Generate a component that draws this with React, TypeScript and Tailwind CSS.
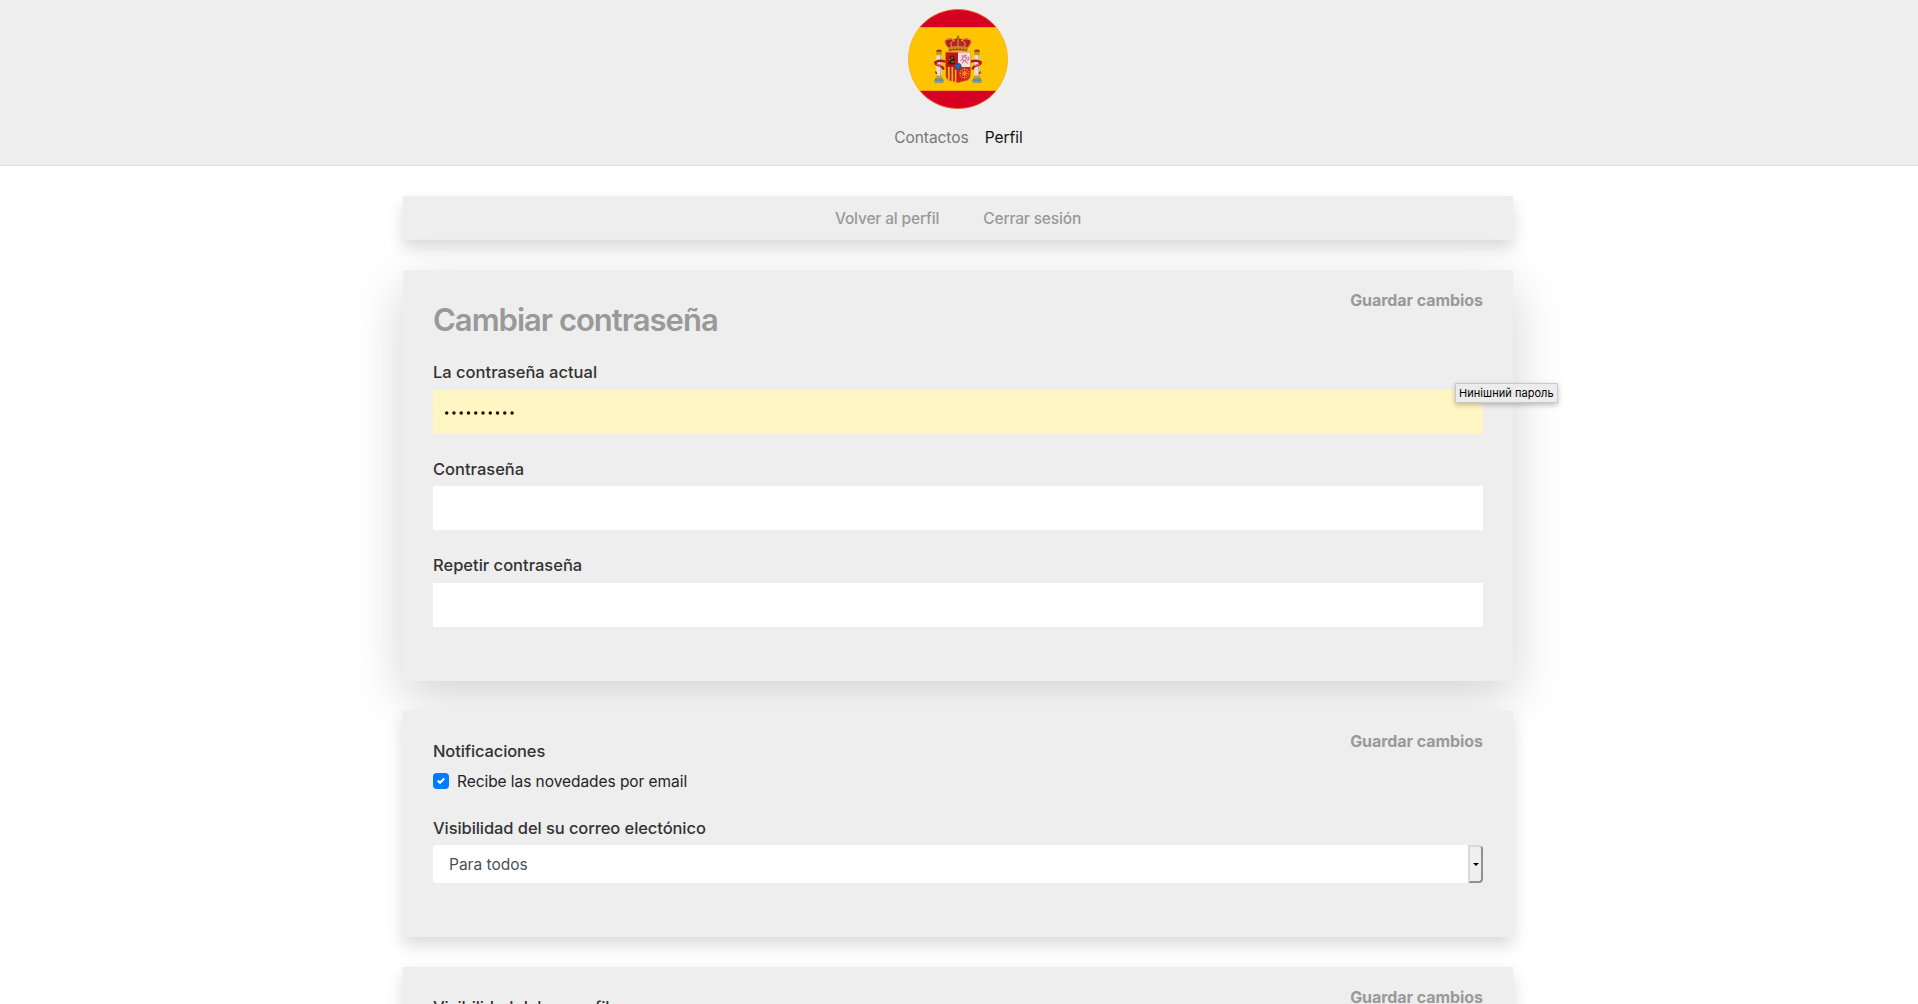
import React from 'react';

function Pillar() {
  return (
    <g>
      <rect x="-2.7" y="46" width="5.4" height="21" fill="#e4dfd2" />
      <rect x="1" y="46" width="1.4" height="21" fill="#b9b4a6" />
      <rect x="-3" y="44.2" width="6" height="2" fill="#c9a227" />
      <path d="M-2.8 41.6Q0 39.6 2.8 41.6L2.2 44.2H-2.2Z" fill="#a5351c" />
      <rect x="-2" y="42.8" width="4" height="1" fill="#d9a520" />
      <rect x="-3" y="66.6" width="6" height="2.2" fill="#c5a02a" />
      <rect x="-3.9" y="68.8" width="7.8" height="2" fill="#8d9a6a" />
      <rect x="-4.5" y="70.4" width="9" height="3.2" fill="#4f86b5" />
      <path d="M-4.5 72.3H4.5" stroke="#9bb7a9" strokeWidth=".7" />
    </g>
  );
}

function FlagLogo() {
  return (
    <svg viewBox="0 0 100 100" className="size-[100px]" aria-label="España">
      <defs>
        <clipPath id="disc">
          <circle cx="50" cy="50" r="49.8" />
        </clipPath>
        <clipPath id="shield">
          <path d="M37.6 43.2H62.5V65Q62.5 71.5 56 72L50 73.6L44 72Q37.6 71.5 37.6 65Z" />
        </clipPath>
      </defs>
      <g clipPath="url(#disc)">
        <rect width="100" height="100" fill="#ffc400" />
        <rect width="100" height="18.2" fill="#d60023" />
        <rect y="81.8" width="100" height="18.2" fill="#d60023" />
      </g>
      <circle cx="50" cy="50" r="49.6" fill="none" stroke="#f6a04a" strokeWidth=".6" opacity=".8" />
      <g transform="translate(31 0)">
        <Pillar />
      </g>
      <g transform="translate(69 0)">
        <Pillar />
      </g>
      <g fill="none" stroke="#b5151f" strokeWidth="2.5">
        <path d="M37.4 52.6Q31 50.6 27.4 53.2Q27 55.2 31 56.4Q35.6 57.6 35.2 60.6" />
        <path d="M62.6 52.6Q69 50.6 72.6 53.2Q73 55.2 69 56.4Q64.4 57.6 64.8 60.6" />
      </g>
      <path d="M28.4 55.2L33.4 57M71.6 55.2L66.6 57" stroke="#e8c6a0" strokeWidth=".7" />
      <path d="M27.6 62.5L28.6 65M72.4 62.5L71.4 65" stroke="#b5151f" strokeWidth="1.4" />
      <g>
        <path d="M40.4 39.6Q34.2 32.6 38.2 30.2Q42 28.2 46 30.4Q50 28 54 30.4Q58 28.2 61.8 30.2Q65.8 32.6 59.6 39.6Z" fill="#b8202a" />
        <path d="M40.6 39.4Q34.4 32.6 38.4 30.4Q43.4 28.4 46.6 31.8M59.4 39.4Q65.6 32.6 61.6 30.4Q56.6 28.4 53.4 31.8M43.6 38Q41.2 32.8 46.6 31.4M56.4 38Q58.8 32.8 53.4 31.4M50 30.4V38" fill="none" stroke="#e5ad2c" strokeWidth="1" />
        <path d="M39.8 38.2Q50 35.6 60.2 38.2L59.4 42.6Q50 40.8 40.6 42.6Z" fill="#c58a1f" />
        <path d="M41.6 41.4Q50 39.2 58.4 41.4" fill="none" stroke="#9c1d1d" strokeWidth="1.2" strokeDasharray="2 1.2" />
        <circle cx="50" cy="29.2" r="1.4" fill="#a67716" />
        <path d="M50 26.4V29.2M48.9 27.4H51.1" stroke="#91620f" strokeWidth=".7" />
      </g>
      <g clipPath="url(#shield)">
        <rect x="37" y="43" width="13" height="15.2" fill="#d1101f" />
        <rect x="50" y="43" width="13" height="15.2" fill="#f3e1e4" />
        <rect x="37" y="58" width="13" height="16" fill="#f4b51c" />
        <path d="M39 58V74M42.6 58V74M46 58V74M49.3 58V74" stroke="#c9151e" strokeWidth="1.7" />
        <rect x="50" y="58" width="13" height="16" fill="#d1201f" />
        <g fill="none" stroke="#eda52a" strokeWidth=".9">
          <circle cx="56.5" cy="64.4" r="4.6" strokeDasharray="1.5 .8" />
          <circle cx="56.5" cy="64.4" r="1.7" />
          <path d="M51.8 64.4H61.2M56.5 59.6V69.4M53.2 61L59.8 67.8M59.8 61L53.2 67.8" strokeDasharray="1.2 .6" />
        </g>
      </g>
      <path d="M40.4 55.6V53L41.6 52.2L40.6 50.4L42 48.8L41.4 46.8L43.2 47.6L44 45.6L45 47.4L46.8 46.8L46.2 49L47.4 50.6L46.2 52.2L47.4 55.6Z" fill="#342313" />
      <path d="M41 50.6H42.8M43.4 53H46M43 48.8H45" stroke="#c99a22" strokeWidth=".9" />
      <path d="M53.4 46.4L55.4 48.4L54 50L56.4 51.6L54.2 54.4M58.6 45.8L56.4 47.6L58.8 49L57 51.6L59.6 54.6M55.4 46L57.6 47M59 51.4L60.8 50.4L60.2 47.6M54 51.8L52.2 51" fill="none" stroke="#d6759f" strokeWidth="1.2" />
      <path d="M37.6 43.2H62.5V65Q62.5 71.5 56 72L50 73.6L44 72Q37.6 71.5 37.6 65Z" fill="none" stroke="#b97a1c" strokeWidth=".5" />
      <circle cx="50" cy="57.8" r="3.7" fill="#c4222b" />
      <circle cx="50" cy="57.8" r="3.1" fill="#1c5c9e" />
      <path d="M48.6 56.8H49.4M50.8 56.8H51.6M49.6 59H50.4" stroke="#7fa3a6" strokeWidth=".9" />
    </svg>
  );
}

function Card({ className, children }: { className: string; children: React.ReactNode }) {
  return <section className={`relative bg-[#eee] px-[30px] ${className}`}>{children}</section>;
}

const shadow = 'shadow-[0_8px_16px_rgba(0,0,0,0.15)]';
const shadowLarge = 'shadow-[0_16px_48px_rgba(0,0,0,0.175)]';

function SaveButton() {
  return (
    <button className="absolute right-[30px] top-[18px] text-base leading-6 font-bold tracking-[-0.06px] text-[#999]">
      Guardar cambios
    </button>
  );
}

function Label({ children, className = '' }: { children: React.ReactNode; className?: string }) {
  return <div className={`h-6 text-[16.5px] leading-6 font-medium text-[#333] ${className}`}>{children}</div>;
}

function PasswordField({ label, filled = 0, className }: { label: string; filled?: number; className: string }) {
  return (
    <div className={`flex flex-col ${className}`}>
      <Label>{label}</Label>
      <div className={`flex h-11 items-center pt-0.5 pl-[11px] ${filled ? 'bg-[#fff6c4]' : 'bg-white'}`}>
        <svg viewBox="0 0 74 6" className="h-1.5 w-[74px]" fill="#1c1400">
          {Array.from({ length: filled }, (_, i) => (
            <circle key={i} cx={2.7 + i * 7.26} cy="3" r="1.75" />
          ))}
        </svg>
      </div>
    </div>
  );
}

export default function App() {
  return (
    <div className="h-[1004px] overflow-hidden bg-white font-['Inter',sans-serif] text-[15.5px] leading-6 text-[#212529]">
      <header className="flex h-[166px] flex-col items-center border-b border-[#dcdcdc] bg-[#eee] pt-[9px] pr-0.5">
        <FlagLogo />
        <nav className="mt-[17px] flex gap-4 pl-px leading-6">
          <a className="tracking-[-0.05px] text-[#777]">Contactos</a>
          <a className="text-[#111]">Perfil</a>
        </nav>
      </header>

      <main className="mt-[30px] ml-[403px] flex w-[1110px] flex-col gap-[30px]">
        <Card className={`flex h-11 items-center justify-center gap-11 pt-0.5 font-[450] tracking-[-0.16px] text-[#999] ${shadow}`}>
          <a>Volver al perfil</a>
          <a>Cerrar sesión</a>
        </Card>

        <Card className={`h-[411px] pt-[30px] ${shadowLarge}`}>
          <SaveButton />
          <h2 className="mb-[21px] h-[39px] pt-px text-[31px] leading-[38px] font-[560] tracking-[-1px] text-[#999]">
            Cambiar contraseña
          </h2>
          <PasswordField label="La contraseña actual" filled={10} className="mb-[23px] gap-1.5" />
          <PasswordField label="Contraseña" className="mb-[23px] gap-[5px]" />
          <PasswordField label="Repetir contraseña" className="gap-1.5" />
          <div className="absolute left-[1052px] top-[113px] flex h-5 items-center border border-[#c9c9c9] bg-[#ececec] px-[3px] text-[11px] leading-none tracking-[0.05px] whitespace-nowrap text-black shadow-[0_2px_5px_rgba(0,0,0,0.25)]">
            Нинішний пароль
          </div>
        </Card>

        <Card className={`h-[226px] pt-[28px] ${shadow}`}>
          <SaveButton />
          <Label className="tracking-[-0.12px]">Notificaciones</Label>
          <label className="mt-1.5 flex h-6 items-center gap-2 tracking-[-0.06px]">
            <span className="flex size-4 items-center justify-center rounded-[4px] bg-[#007bff]">
              <svg viewBox="0 0 8 8" className="size-2">
                <path fill="#fff" d="M6.564.75l-3.59 3.612-1.538-1.55L0 4.26l2.974 2.99L8 2.193z" />
              </svg>
            </span>
            <span className="pt-0.5">Recibe las novedades por email</span>
          </label>
          <Label className="mt-[23px] tracking-[-0.08px]">Visibilidad del su correo electónico</Label>
          <div className="mt-[5px] flex h-[38px] items-center rounded-[4px] bg-white pl-4 text-[#495057]">
            <span className="flex-1 pt-0.5">Para todos</span>
            <span className="flex h-[38px] w-[15px] items-center justify-center rounded-r-[4px] border-2 border-t-[#d8d8d8] border-r-[#909090] border-b-[#909090] border-l-[#d8d8d8] bg-[#efefef]">
              <svg viewBox="0 0 6 3" className="h-[3px] w-1.5">
                <path d="M0 0H6L3 3Z" />
              </svg>
            </span>
          </div>
        </Card>

        <Card className={`h-[226px] pt-[28px] ${shadow}`}>
          <SaveButton />
          <Label className="tracking-[-0.09px]">Visibilidad del su perfil</Label>
        </Card>
      </main>
    </div>
  );
}
